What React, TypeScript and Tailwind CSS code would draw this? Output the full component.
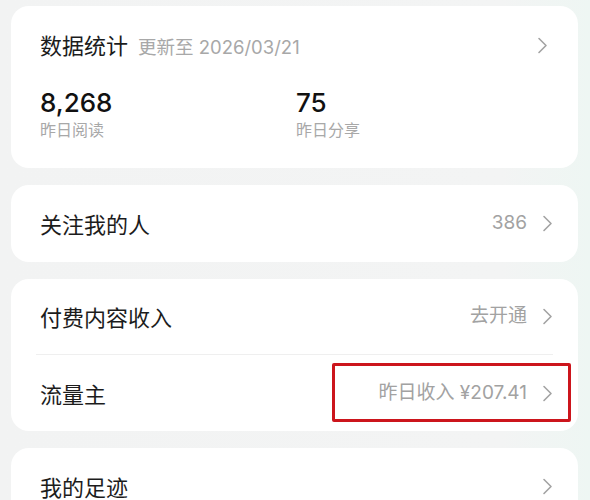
import React from "react";

const font = { fontFamily: '"Noto Sans CJK SC", "Noto Sans", sans-serif' };
const latin = { fontFamily: 'Inter, "Noto Sans CJK SC", sans-serif' };

function Chevron() {
  return (
    <svg width="11" height="17" viewBox="0 0 11 17" fill="none" className="shrink-0">
      <path d="M2 1.5 L9 8.5 L2 15.5" stroke="#a3a3a3" strokeWidth="1.6" strokeLinecap="round" strokeLinejoin="round" />
    </svg>
  );
}

function Row({ label, value, boxed }: { label: string; value?: string; boxed?: boolean }) {
  return (
    <div className="relative flex h-full items-center justify-between pl-[29px] pr-[25px]">
      <span className="text-[22px] text-[#1c1c1c]">{label}</span>
      <div className="flex items-center gap-[15px]">
        {value && (
          <span style={latin} className="text-[19px] text-[#a2a2a2]">
            {value}
          </span>
        )}
        <Chevron />
      </div>
      {boxed && (
        <div className="pointer-events-none absolute right-[7px] top-[8px] h-[59px] w-[239px] rounded-[2px] border-[3.5px] border-[#cc151c]" />
      )}
    </div>
  );
}

export default function App() {
  return (
    <div
      style={font}
      className="h-[500px] w-[590px] overflow-hidden bg-[linear-gradient(90deg,#f2f3f3_0%,#f3f4f4_85%,#eef6f3_100%)] px-[11px] pt-[6px]"
    >
      <div className="flex w-[567px] flex-col gap-[17px]">
        {/* data overview */}
        <div className="h-[162px] rounded-[18px] bg-white pl-[29px] pr-[30px] pt-[22px]">
          <div className="flex h-[34px] items-center justify-between">
            <div className="flex items-baseline gap-[10px]">
              <span className="text-[22px] text-[#1c1c1c]">数据统计</span>
              <span style={latin} className="text-[18.5px] text-[#a8a8a8]">
                更新至 2026/03/21
              </span>
            </div>
            <Chevron />
          </div>
          <div className="mt-[25px] flex">
            <div className="w-[256px]">
              <div style={latin} className="text-[26px] font-medium leading-[31px] text-[#111]">
                8,268
              </div>
              <div className="text-[16px] leading-[22px] text-[#a8a8a8]">昨日阅读</div>
            </div>
            <div>
              <div style={latin} className="text-[26px] font-medium leading-[31px] text-[#111]">
                75
              </div>
              <div className="text-[16px] leading-[22px] text-[#a8a8a8]">昨日分享</div>
            </div>
          </div>
        </div>

        {/* followers */}
        <div className="h-[77px] rounded-[18px] bg-white">
          <Row label="关注我的人" value="386" />
        </div>

        {/* income */}
        <div className="flex h-[152px] flex-col rounded-[18px] bg-white">
          <div className="h-[75px]">
            <Row label="付费内容收入" value="去开通" />
          </div>
          <div className="mx-[25px] h-px bg-[#efefef]" />
          <div className="h-[76px]">
            <Row label="流量主" value="昨日收入 ¥207.41" boxed />
          </div>
        </div>

        {/* footprints */}
        <div className="h-[76px] rounded-[18px] bg-white">
          <Row label="我的足迹" />
        </div>
      </div>
    </div>
  );
}
